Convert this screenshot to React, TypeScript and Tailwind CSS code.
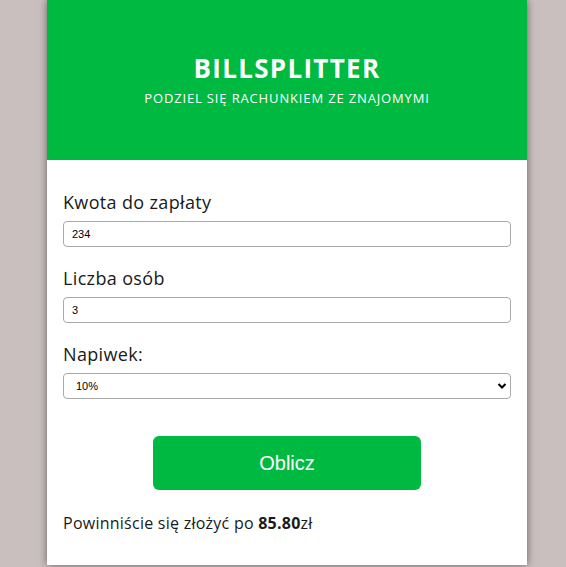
import React from "react";

export default function App() {
  return (
    <div className="min-h-[567px] w-full bg-[#cabfbf]" style={{ fontFamily: '"Open Sans", sans-serif' }}>
      <div className="ml-[47px] w-[480px] h-[565px] bg-white shadow-[0_0_8px_rgba(0,0,0,0.5)]">
        <div className="h-[160px] bg-[#00b940] flex flex-col items-center pt-[52px] text-white">
          <h1 className="text-[26px] leading-[32px] font-bold tracking-[1.3px]">BILLSPLITTER</h1>
          <p className="mt-[5px] text-[13px] leading-[18px] tracking-[0.85px]">PODZIEL SIĘ RACHUNKIEM ZE ZNAJOMYMI</p>
        </div>
        <div className="px-4 pt-[30px]">
          <label className="block text-[18px] leading-[24px] tracking-[0.35px] text-[#1a1a1a]">Kwota do zapłaty</label>
          <input
            defaultValue="234"
            className="mt-[7px] block w-full h-[26px] rounded-[4px] border border-[#aaa] px-[8px] text-[11px] text-black"
            style={{ fontFamily: '"Liberation Sans", Arial, sans-serif' }}
          />
          <label className="mt-[19px] block text-[18px] leading-[24px] tracking-[0.35px] text-[#1a1a1a]">Liczba osób</label>
          <input
            defaultValue="3"
            className="mt-[7px] block w-full h-[26px] rounded-[4px] border border-[#aaa] px-[8px] text-[11px] text-black"
            style={{ fontFamily: '"Liberation Sans", Arial, sans-serif' }}
          />
          <label className="mt-[19px] block text-[18px] leading-[24px] tracking-[0.35px] text-[#1a1a1a]">Napiwek:</label>
          <div className="relative mt-[7px]">
            <select
              defaultValue="10"
              className="block w-full h-[26px] appearance-none rounded-[4px] border border-[#aaa] bg-white pl-[12px] text-[11px] text-black"
              style={{ fontFamily: '"Liberation Sans", Arial, sans-serif' }}
            >
              <option value="10">10%</option>
              <option value="15">15%</option>
              <option value="20">20%</option>
            </select>
            <svg className="pointer-events-none absolute right-[4px] top-[9px]" width="10" height="8" viewBox="0 0 10 8">
              <path d="M1.5 2 L5 5.5 L8.5 2" fill="none" stroke="#000" strokeWidth="2" />
            </svg>
          </div>
          <div className="flex justify-center mt-[37px]">
            <button
              className="w-[268px] h-[54px] rounded-[6px] bg-[#00b940] text-white text-[20px]"
              style={{ fontFamily: '"Liberation Sans", Arial, sans-serif' }}
            >
              Oblicz
            </button>
          </div>
          <p className="mt-[22px] text-[16px] leading-[22px] tracking-[0.25px] text-[#1a1a1a]">
            Powinniście się złożyć po <span className="font-bold">85.80</span>zł
          </p>
        </div>
      </div>
    </div>
  );
}
